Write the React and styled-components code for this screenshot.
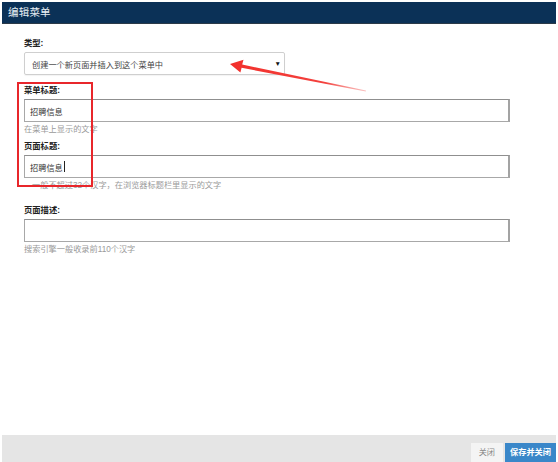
import React from 'react'
import styled, { createGlobalStyle } from 'styled-components'

const Global = createGlobalStyle`
  html, body {
    margin: 0;
    padding: 0;
    background: #fff;
  }
  body {
    font-family: "Liberation Sans", "Noto Sans CJK SC", sans-serif;
  }
`

const fields = [
  { label: '菜单标题:', value: '招聘信息', help: '在菜单上显示的文字', gap: 8 },
  { label: '页面标题:', value: '招聘信息', help: '一般不超过32个汉字，在浏览器标题栏里显示的文字', gap: 2, caret: true, indent: 8 },
  { label: '页面描述:', value: '', help: '搜索引擎一般收录前110个汉字', gap: 10 },
]

function App() {
  return (
    <>
      <Global />
      <Page>
        <Dialog>
          <Header>编辑菜单</Header>
          <Body>
            <Group>
              <Label>类型:</Label>
              <Select>
                <span>创建一个新页面并插入到这个菜单中</span>
                <Arrow>▼</Arrow>
              </Select>
            </Group>
            {fields.map(f => (
              <Group key={f.label} gap={f.gap}>
                <Label>{f.label}</Label>
                <Input>
                  {f.value}
                  {f.caret && <Caret />}
                </Input>
                <Help indent={f.indent}>{f.help}</Help>
              </Group>
            ))}
            <Highlight />
            <Pointer viewBox="0 0 558 462">
              <defs>
                <linearGradient id="fade" x1="230" y1="64" x2="366" y2="91" gradientUnits="userSpaceOnUse">
                  <stop offset="0" stopColor="#f2302c" />
                  <stop offset="0.7" stopColor="#f3413d" />
                  <stop offset="1" stopColor="#f79a98" stopOpacity="0.6" />
                </linearGradient>
              </defs>
              <polygon
                points="230,64 243.5,59.8 242.2,64.6 366,90.4 365.8,91.4 241.6,67.8 240.4,72.6"
                fill="url(#fade)"
              />
            </Pointer>
          </Body>
          <Footer>
            <Button>关闭</Button>
            <Button primary>保存并关闭</Button>
          </Footer>
        </Dialog>
      </Page>
    </>
  )
}

export default App

const Page = styled.div`
  width: 558px;
  height: 462px;
  padding: 2px 2px 0 2px;
  box-sizing: border-box;
`

const Dialog = styled.div`
  width: 554px;
  height: 460px;
  display: flex;
  flex-direction: column;
  background: #fff;
`

const Header = styled.div`
  height: 21px;
  background: #0b3157;
  border-bottom: 1px solid #2c3a48;
  color: #e8eef4;
  font-size: 10.5px;
  line-height: 21px;
  padding-left: 6px;
  letter-spacing: 0.2px;
`

const Body = styled.div`
  flex: 1;
  position: relative;
  padding: 12px 0 0 22px;
`

const Group = styled.div`
  margin-top: ${({ gap }) => (gap ? gap : 0)}px;
`

const Label = styled.div`
  font-size: 8.3px;
  font-weight: 700;
  color: #222;
  line-height: 15px;
  margin-bottom: 1px;
`

const Select = styled.div`
  width: 261px;
  height: 23px;
  box-sizing: border-box;
  border: 1px solid #cfcfcf;
  border-radius: 2px;
  box-shadow: 0 1px 1px rgba(0, 0, 0, 0.05);
  display: flex;
  align-items: center;
  justify-content: space-between;
  padding: 0 3px 0 7px;
  font-size: 8.2px;
  color: #444;
`

const Arrow = styled.span`
  font-size: 6.5px;
  color: #111;
`

const Input = styled.div`
  width: 486px;
  height: 23px;
  box-sizing: border-box;
  border: 1px solid #a8a8a8;
  border-top-color: #8f8f8f;
  border-right: 2px solid #a3a3a3;
  display: flex;
  align-items: center;
  padding-left: 5px;
  font-size: 8.2px;
  color: #333;
`

const Caret = styled.span`
  display: inline-block;
  width: 1px;
  height: 11px;
  background: #222;
  margin-left: 1px;
`

const Help = styled.div`
  font-size: 8.2px;
  color: #9a9a9a;
  line-height: 15px;
  padding-left: ${({ indent }) => (indent ? indent : 0)}px;
`

const Highlight = styled.div`
  position: absolute;
  left: 15px;
  top: 58px;
  width: 72px;
  height: 101px;
  border: 2px solid #e8262b;
  pointer-events: none;
`

const Pointer = styled.svg`
  position: absolute;
  left: -2px;
  top: -24px;
  width: 558px;
  height: 462px;
  pointer-events: none;
`

const Footer = styled.div`
  height: 27px;
  background: #e5e5e5;
  display: flex;
  justify-content: flex-end;
  align-items: flex-end;
  gap: 2px;
`

const Button = styled.div`
  height: 19px;
  line-height: 19px;
  padding: 0 ${({ primary }) => (primary ? 5 : 8)}px;
  font-size: 8.2px;
  background: ${({ primary }) => (primary ? '#3a87c9' : '#f4f4f4')};
  color: ${({ primary }) => (primary ? '#fff' : '#8a8a8a')};
  font-weight: ${({ primary }) => (primary ? 700 : 400)};
`
